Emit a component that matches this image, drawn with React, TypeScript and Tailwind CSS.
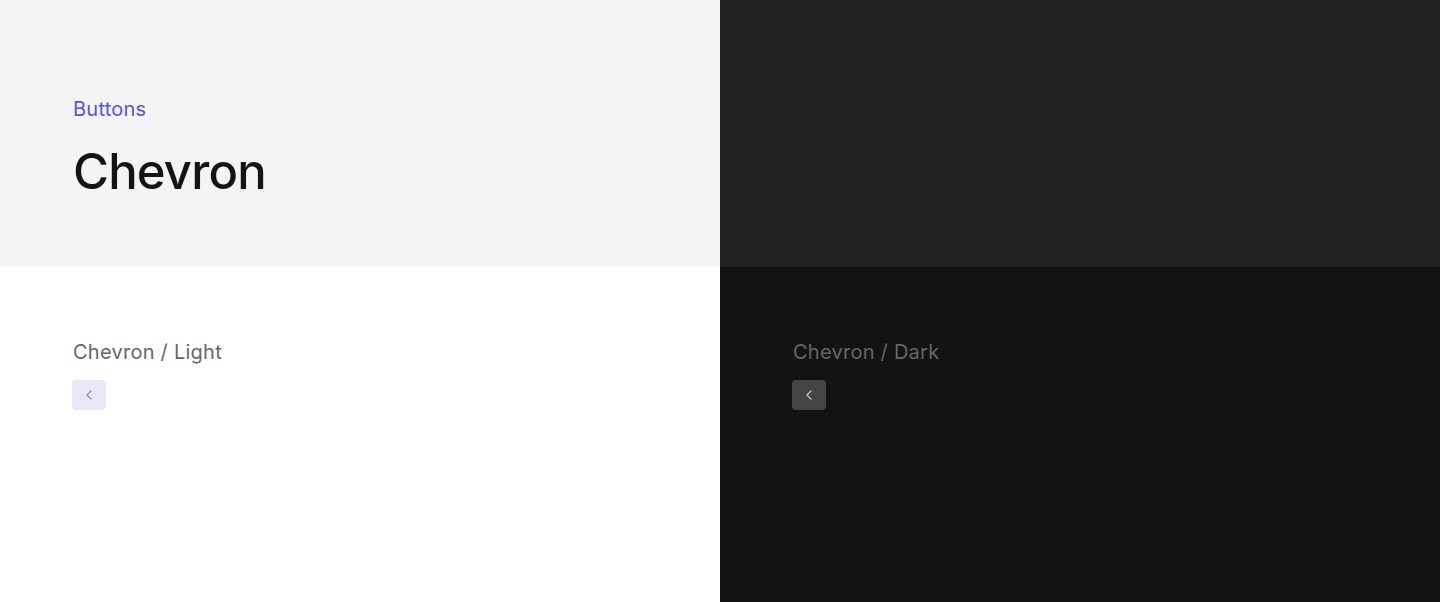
import React from "react";

const font = { fontFamily: '"Inter", "Lato", sans-serif' };

function ChevronButton({ dark }: { dark?: boolean }) {
  return (
    <button
      className={
        dark
          ? "flex h-[30px] w-[34px] items-center justify-center rounded-[4px] bg-[#444444]"
          : "flex h-[30px] w-[34px] items-center justify-center rounded-[4px] bg-[#e9e8f8]"
      }
    >
      <svg width="6" height="10" viewBox="0 0 6 10" fill="none">
        <path
          d="M5 0.8L1 5L5 9.2"
          stroke={dark ? "#b4b4b4" : "#8a8a9a"}
          strokeWidth={dark ? 1.4 : 1.2}
          strokeLinecap="round"
          strokeLinejoin="round"
        />
      </svg>
    </button>
  );
}

export default function App() {
  return (
    <div className="flex h-[602px] w-[1440px] flex-col" style={font}>
      <div className="flex h-[267px]">
        <div className="flex w-[720px] flex-col bg-[#f4f4f4] pl-[73px] pt-[97px]">
          <div className="text-[20px] leading-[24px] tracking-[0.25px] text-[#5b52d6]">Buttons</div>
          <div className="mt-[21px] text-[49px] font-medium leading-[60px] tracking-[-0.8px] text-[#141414]">Chevron</div>
        </div>
        <div className="w-[720px] bg-[#222222]" />
      </div>
      <div className="flex flex-1">
        <div className="flex w-[720px] flex-col bg-white pl-[72px] pt-[72px]">
          <div className="pl-[1px] text-[20px] leading-[26px] tracking-[0.25px] text-[#666666]">Chevron / Light</div>
          <div className="mt-[15px]">
            <ChevronButton />
          </div>
        </div>
        <div className="flex w-[720px] flex-col bg-[#131313] pl-[72px] pt-[72px]">
          <div className="pl-[1px] text-[20px] leading-[26px] tracking-[0.25px] text-[#666666]">Chevron / Dark</div>
          <div className="mt-[15px]">
            <ChevronButton dark />
          </div>
        </div>
      </div>
    </div>
  );
}
